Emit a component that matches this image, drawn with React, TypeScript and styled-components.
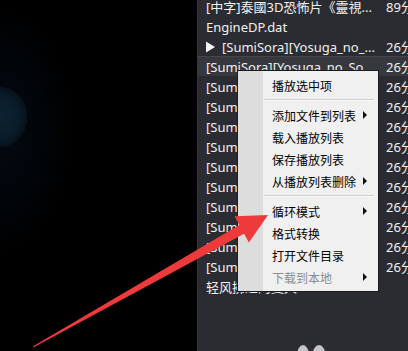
import React from "react";
import styled, {createGlobalStyle} from "styled-components";

const GlobalStyle = createGlobalStyle`
  html, body, #root {
    margin: 0;
    padding: 0;
    height: 100%;
    background: #000;
  }
`

const Screen = styled.div`
  position: relative;
  display: flex;
  width: 408px;
  height: 351px;
  overflow: hidden;
  font-family: "Noto Sans", "Noto Sans CJK SC", sans-serif;
`

const VideoArea = styled.div`
  width: 197px;
  flex: none;
  background:
    radial-gradient(ellipse 27px 30px at 0 117px, #0c2333 0, #0a1c29 70%, #06111a 100%, transparent 101%),
    radial-gradient(ellipse 70px 120px at 0 130px, #030a10 0, #01050a 60%, #000 100%),
    #000;
`

const Playlist = styled.div`
  flex: 1;
  display: flex;
  flex-direction: column;
  background: #2b2c31;
  border-left: 1px solid #36373c;
  overflow: hidden;
`

// list is scrolled a few pixels, first row is clipped at the top
const Rows = styled.div`
  margin-top: -4px;
  display: flex;
  flex-direction: column;
`

const Row = styled.div<{ $selected?: boolean }>`
  display: flex;
  align-items: center;
  height: 20px;
  box-sizing: border-box;
  padding-left: 8px;
  font-size: 13px;
  color: #f1f1f1;
  white-space: nowrap;
  background: ${p => p.$selected ? "#37383d" : "transparent"};
  border-top: 1px solid ${p => p.$selected ? "#45464b" : "transparent"};
`

const Title = styled.div`
  width: 180px;
  flex: none;
  display: flex;
  align-items: center;
  overflow: hidden;
`

const Duration = styled.div`
  flex: none;
`

const PlayMark = styled.svg`
  flex: none;
  margin-left: -1px;
  margin-right: 7px;
`

const Footer = styled.div`
  padding: 44px 0 0 99px;
`

const Menu = styled.div`
  position: absolute;
  left: 237px;
  top: 70px;
  width: 142px;
  box-sizing: border-box;
  padding: 3px 0;
  border: 1px solid #1c1c1c;
  background: linear-gradient(to right, #dddddd 0, #dddddd 25px, #f0f0f0 25px);
  font-family: "Noto Sans CJK SC", sans-serif;
  font-size: 12px;
`

const MenuItem = styled.div<{ $disabled?: boolean }>`
  display: flex;
  align-items: center;
  justify-content: space-between;
  height: 22px;
  padding: 0 11px 0 34px;
  color: ${p => p.$disabled ? "#8d8d8d" : "#000"};
`

const SubArrow = styled.span`
  width: 0;
  height: 0;
  border-top: 4px solid transparent;
  border-bottom: 4px solid transparent;
  border-left: 4px solid #111;
`

const Separator = styled.div`
  height: 8px;
  display: flex;
  align-items: center;
  padding: 0 4px 0 26px;

  &::after {
    content: "";
    flex: 1;
    height: 1px;
    background: #d0d0d0;
    border-bottom: 1px solid #fafafa;
  }
`

const Overlay = styled.svg`
  position: absolute;
  left: 0;
  top: 0;
  pointer-events: none;
`

const SORA = "[SumiSora][Yosuga_no_So...";

const rows: { title: string; time?: string; playing?: boolean; selected?: boolean }[] = [
  {title: "[中字]泰國3D恐怖片《靈視...", time: "89分钟"},
  {title: "EngineDP.dat"},
  {title: "[SumiSora][Yosuga_no_...", time: "26分钟", playing: true},
  {title: SORA, time: "26分钟", selected: true},
  ...Array.from({length: 10}, () => ({title: SORA, time: "26分钟"})),
  {title: "轻风拂过的夏天"},
];

const menu: ({ label: string; sub?: boolean; disabled?: boolean } | "sep")[] = [
  {label: "播放选中项"},
  "sep",
  {label: "添加文件到列表", sub: true},
  {label: "载入播放列表"},
  {label: "保存播放列表"},
  {label: "从播放列表删除", sub: true},
  "sep",
  {label: "循环模式", sub: true},
  {label: "格式转换"},
  {label: "打开文件目录"},
  {label: "下载到本地", sub: true, disabled: true},
];

export default function App() {
  return (
    <Screen>
      <GlobalStyle/>
      <VideoArea/>
      <Playlist>
        <Rows>
          {rows.map((r, i) => (
            <Row key={i} $selected={r.selected}>
              <Title>
                {r.playing && (
                  <PlayMark width="10" height="12" viewBox="0 0 10 12">
                    <path d="M0 0 L10 6 L0 12 Z" fill="#f4f4f4"/>
                  </PlayMark>
                )}
                {r.title}
              </Title>
              {r.time && <Duration>{r.time}</Duration>}
            </Row>
          ))}
        </Rows>
        <Footer>
          <svg width="30" height="12" viewBox="0 0 30 12">
            <ellipse cx="6" cy="11" rx="6" ry="11" fill="#c5c5c9"/>
            <ellipse cx="22" cy="11" rx="6.5" ry="11" fill="#c5c5c9"/>
          </svg>
        </Footer>
      </Playlist>
      <Menu>
        {menu.map((m, i) => m === "sep" ? <Separator key={i}/> : (
          <MenuItem key={i} $disabled={m.disabled}>
            <span>{m.label}</span>
            {m.sub && <SubArrow/>}
          </MenuItem>
        ))}
      </Menu>
      <Overlay width="408" height="351" viewBox="0 0 408 351">
        <polygon
          fill="#ee3a3a"
          points="33.3,347.5 244.1,233.8 248.9,242.6 268,215 234.5,216.2 239.3,225 32.7,346.5"
        />
      </Overlay>
    </Screen>
  );
}
